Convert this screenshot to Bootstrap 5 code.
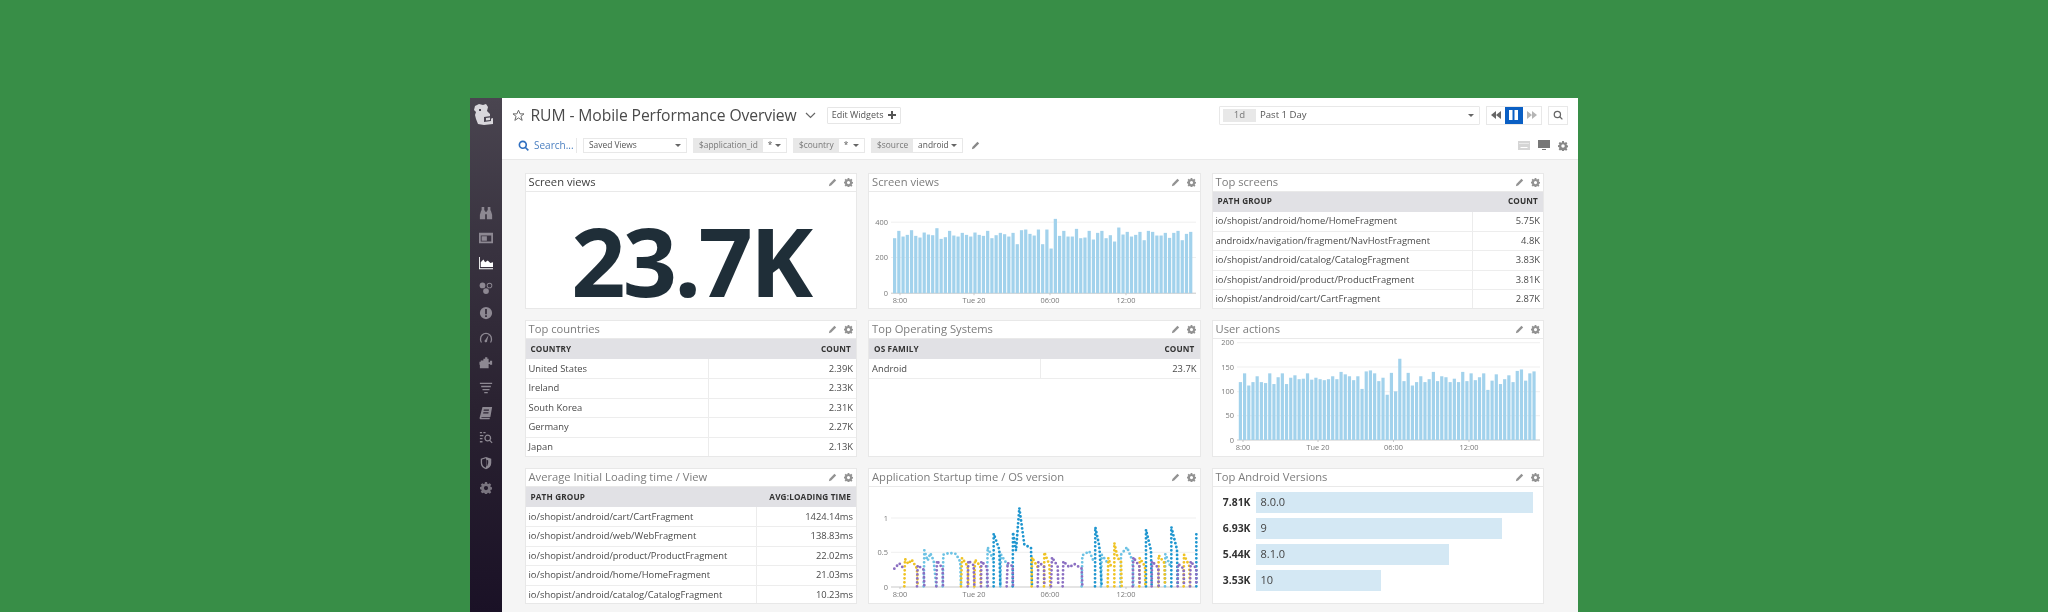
<!doctype html>
<html lang="en">
<head>
<meta charset="utf-8">
<title>RUM - Mobile Performance Overview</title>
<link href="https://cdn.jsdelivr.net/npm/bootstrap@5.3.0/dist/css/bootstrap.min.css" rel="stylesheet">
<style>
html,body{height:612px;overflow:hidden}
body{background:#388e47;padding:98px 470.5px 0 470px;font-family:"Open Sans","Noto Sans",sans-serif;color:#444}
.app-window{height:514px;background:#f5f5f5;filter:blur(.6px);overflow:hidden}
.side-rail{width:31.5px;flex:none;background:linear-gradient(180deg,#4a4550 0%,#38323f 30%,#2a2231 60%,#1a1126 100%);padding-top:2px}
.side-logo{height:100px}
.side-logo svg{width:22px;height:22px;margin-left:2px}
.side-item{height:25px}
.side-item svg{width:14px;height:14px;fill:#8d8892}
.side-item.is-on svg{fill:#fff}
.side-item.is-dim svg{width:12px;height:12px;fill:#79747f}
.top-bar{background:#fff;border-bottom:1px solid #e9e9e9;height:62px}
.title-row{height:30px;padding:4px 10px 0 10px}
.dash-title{font-size:15.700px;color:#4a4a4a;margin:0 0 0 6px;font-weight:400;letter-spacing:-.1px;line-height:22px}
.edit-btn{height:17px;width:74px;margin-left:11px;border:1px solid #e6e6e6;font-size:9px;color:#555;background:#fff;border-radius:1px}
.time-pick{width:260.5px;height:19px;border:1px solid #e8e8e8;margin-left:auto;padding:0 5px 0 3px;font-size:9.6px;color:#555;border-radius:1px}
.time-chip{width:33px;height:13px;background:#e8e8e8;color:#777;margin-right:4px;font-size:9.6px}
.play-group{width:56px;height:19px;border:1px solid #e8e8e8;margin-left:6px}
.play-group>div{flex:1}
.play-on{background:#0a5fc4;height:100%}
.find-btn{width:20px;height:19px;border:1px solid #e8e8e8;margin-left:6px}
.filter-row{height:31px;padding:4px 10px 0 16.5px;font-size:8.4px;color:#555}
.find-link{color:#4a7fc0;font-size:10px;width:59px;border-right:1px solid #e8e8e8;height:15px}
.find-link svg{margin-right:5px}
.pick-box{height:15px;border:1px solid #e8e8e8;margin-left:6px;background:#fff}
.pick-views{width:104px;padding:0 5px}
.pick-key{background:#e8e8e8;color:#777;height:100%;padding:0 5px}
.pick-val{flex:1;padding:0 5px}
.caret-mark{width:0;height:0;border-left:3px solid transparent;border-right:3px solid transparent;border-top:3.5px solid #666}
.wid-grid{display:grid;grid-template-columns:repeat(3,332.5px);grid-auto-rows:136.3px;column-gap:11px;row-gap:11.5px;padding:12.5px 0 0 23px}
.wid-box{background:#fff;border:1px solid #e8e8e8;overflow:hidden}
.wid-head{height:18px;flex:none;border-bottom:1px solid #e9e9e9;padding:0 3.5px 0 3px;font-size:11.2px;color:#7c7c7c}
.wid-head.is-dark{color:#3c3c3c}
.wid-tools{gap:7px}
.wid-tools svg{width:9px;height:9px;fill:#929292}
.wid-fill{flex:1;min-height:0}
.wid-fill svg{display:block;width:331px;height:118px}
.big-num{font-size:95px;font-weight:700;color:#1f2e38;letter-spacing:-2.8px;line-height:1;padding-top:21px}
.dd-table{margin:0;table-layout:fixed;width:100%;font-size:9.4px;color:#4a4a4a;--bs-table-color:#4a4a4a}
.dd-table th{background:#e1e1e5;color:#333;font-size:8.2px;font-weight:700;letter-spacing:.15px;height:20px;padding:0 5px;border:0;vertical-align:middle}
.dd-table td{height:19.5px;padding:0 3px;border-bottom:1.5px solid #ededed;vertical-align:middle;white-space:nowrap}
.dd-table td+td{border-left:1px solid #ececec;text-align:right}
.dd-table th+th{text-align:right}
.wid-bars{padding:5px 10px 0 0;gap:5px}
.bar-val{width:43px;flex:none;text-align:right;padding-right:5px;font-size:10.4px;font-weight:700;color:#333}
.bar-line{height:21px}
.bar-track{flex:1}
.bar-fill{height:21px;background:#d4e8f4;padding-left:5px;font-size:11px;color:#444}
</style>
</head>
<body>
<svg class="d-none" aria-hidden="true">
<symbol id="i-pen" viewBox="0 0 16 16"><path d="M11.500 1.500 14.500 4.500 5.500 13.500 1.500 14.500 2.500 10.500z"/></symbol>
<symbol id="i-gear" viewBox="0 0 16 16"><path fill-rule="evenodd" d="M6.600 0h2.800l.4 2.200 1.300.6L13 1.500l2 2-1.300 1.900.6 1.300 2.200.4v2.800l-2.200.4-.6 1.300 1.300 1.900-2 2-1.900-1.300-1.300.6-.4 2.200H6.600l-.4-2.200-1.300-.6L3 15.100l-2-2 1.300-1.900-.6-1.300L-.5 9.500V6.700l2.200-.4.6-1.300L1 3.500l2-2 1.900 1.300 1.300-.6zM8 5.300a2.800 2.800 0 1 0 0 5.600 2.800 2.800 0 0 0 0-5.600z"/></symbol>
</svg>
<div class="app-window d-flex">
  <nav class="side-rail d-flex flex-column align-items-center">
    <div class="side-logo w-100"><svg viewBox="0 0 22 22"><path fill="#d9d7dc" d="M3 3 7 1l4 1 3-1 2 3-1 4 3 3v5l3-1v6l-9 1-6-1-2-5-1-4 1-3-2-2z"/><path fill="#4a4550" d="M7 6h2v2H7zM12 14l7-1v5l-7 1z"/><path fill="#d9d7dc" d="M14 15l4-.5v2.500l-4 .5z"/></svg></div>
    <div class="side-item d-flex align-items-center"><svg viewBox="0 0 16 16"><path d="M3 1h3v4H3zM10 1h3v4h-3zM2.500 5h4.500v10H1V10zM9 5h4.500L15 10v5H9zM7 6.500h2v3H7z"/></svg></div>
    <div class="side-item d-flex align-items-center"><svg viewBox="0 0 16 16"><path fill-rule="evenodd" d="M0 2h16v12H0zM2 5v7h12V5zM3 6h6v5H3z"/></svg></div>
    <div class="side-item is-on d-flex align-items-center"><svg viewBox="0 0 16 16"><path d="M0 1h1v13h15v1H0zM2 12.500V7l3-3 2 3 3-2 3 3 3-1v5.500z"/></svg></div>
    <div class="side-item d-flex align-items-center"><svg viewBox="0 0 16 16"><circle cx="4" cy="5" r="3.300"/><circle cx="8" cy="11.500" r="3.300"/><path fill-rule="evenodd" d="M12 2a3.200 3.200 0 1 1 0 6.400A3.200 3.200 0 0 1 12 2zm0 1a2.200 2.200 0 1 0 0 4.400A2.200 2.200 0 0 0 12 3z"/></svg></div>
    <div class="side-item d-flex align-items-center"><svg viewBox="0 0 16 16"><path fill-rule="evenodd" d="M8 1a7 7 0 1 1 0 14A7 7 0 0 1 8 1zM7 3.500v6h2v-6zM7 10.500v2h2v-2z"/></svg></div>
    <div class="side-item d-flex align-items-center"><svg viewBox="0 0 16 16"><path d="M8 2a7 7 0 0 1 7 7 7 7 0 0 1-1 4h-1.500a6 6 0 0 0 1-4A5.500 5.500 0 0 0 8 3.500 5.500 5.500 0 0 0 2.500 9a6 6 0 0 0 1 4H2A7 7 0 0 1 1 9a7 7 0 0 1 7-7zM11 4.500 9.300 11a1.500 1.500 0 1 1-2-1z"/></svg></div>
    <div class="side-item d-flex align-items-center"><svg viewBox="0 0 16 16"><path d="M5 3h2V1.500h2.500V3H11v4h1.500V5.500H15V10h-2.500V9H11v5H1V10H.5V6.500H2V5h3z"/></svg></div>
    <div class="side-item d-flex align-items-center"><svg viewBox="0 0 16 16"><path d="M1 2h14v1.500H1zM2.500 5.500h11V7h-11zM4 9h8v1.500H4zM6 12.500h4V14H6z"/></svg></div>
    <div class="side-item d-flex align-items-center"><svg viewBox="0 0 16 16"><path fill-rule="evenodd" d="M4 1h11l-2 11.500H3.500c-.6 0-1 .4-1 .8h10L12 15H1.500c-.5 0-1-.5-.8-1.500zM5.500 4l-.3 1.500h6L11.500 4zM5 7l-.3 1.500h6L11 7z"/></svg></div>
    <div class="side-item d-flex align-items-center"><svg viewBox="0 0 16 16"><path fill-rule="evenodd" d="M1 1h2.500v1.500H1zM5 1h2.500v1.500H5zM1 4.500h4V6H1zM1 8h3v1.500H1zM1 11.500h3V13H1zM10 4a4 4 0 0 1 3.100 6.500L15.500 13l-1 1-2.500-2.500A4 4 0 1 1 10 4zm0 1.500a2.500 2.500 0 1 0 0 5 2.500 2.500 0 0 0 0-5z"/></svg></div>
    <div class="side-item d-flex align-items-center"><svg viewBox="0 0 16 16"><path fill-rule="evenodd" d="M8 1l6 2v5c0 3.500-2.500 6-6 7-3.500-1-6-3.500-6-7V3zM8 2.500 3.500 4v4c0 2.700 1.800 4.500 4.500 5.400zM8.500 4v8l1-1 1-3V5z"/></svg></div>
    <div class="side-item is-dim d-flex align-items-center"><svg viewBox="0 0 16 16"><use href="#i-gear"/></svg></div>
  </nav>
  <main class="flex-grow-1">
    <header class="top-bar">
      <div class="title-row d-flex align-items-center">
        <svg width="13" height="13" viewBox="0 0 16 16" fill="none" stroke="#666" stroke-width="1.200"><path d="M8 1.500 10 6h4.800l-3.800 3 1.500 5L8 11l-4.500 3L5 9 1.200 6H6z"/></svg>
        <h1 class="dash-title">RUM - Mobile Performance Overview</h1>
        <svg class="ms-2" width="11" height="7" viewBox="0 0 11 7" fill="none" stroke="#666" stroke-width="1.200"><path d="M1 1l4.500 4.500L10 1"/></svg>
        <div class="edit-btn d-flex align-items-center justify-content-center gap-1">Edit Widgets <svg width="8" height="8" viewBox="0 0 8 8" fill="#555"><path d="M3 0h2v3h3v2H5v3H3V5H0V3h3z"/></svg></div>
        <div class="time-pick d-flex align-items-center"><div class="time-chip d-flex align-items-center justify-content-center">1d</div>Past 1 Day<span class="caret-mark ms-auto"></span></div>
        <div class="play-group d-flex align-items-center">
          <div class="d-flex justify-content-center"><svg width="10" height="8" viewBox="0 0 10 8" fill="#666"><path d="M5 0v8L0 4zM10 0v8L5 4z"/></svg></div>
          <div class="play-on d-flex align-items-center justify-content-center"><svg width="9" height="10" viewBox="0 0 9 10" fill="#fff"><path d="M0 0h3.500v10H0zM5.500 0H9v10H5.500z"/></svg></div>
          <div class="d-flex justify-content-center"><svg width="10" height="8" viewBox="0 0 10 8" fill="#b5b5b5"><path d="M0 0v8l5-4zM5 0v8l5-4z"/></svg></div>
        </div>
        <div class="find-btn d-flex align-items-center justify-content-center"><svg width="10" height="10" viewBox="0 0 16 16" fill="none" stroke="#666" stroke-width="2"><circle cx="7" cy="7" r="5"/><path d="M10.500 10.500 15 15"/></svg></div>
      </div>
      <div class="filter-row d-flex align-items-center">
        <div class="find-link d-flex align-items-center"><svg width="11" height="11" viewBox="0 0 16 16" fill="none" stroke="#2f6fc0" stroke-width="2.400"><circle cx="7" cy="7" r="5"/><path d="M10.500 10.500 15 15"/></svg>Search...</div>
        <div class="pick-box pick-views d-flex align-items-center justify-content-between">Saved Views<span class="caret-mark"></span></div>
        <div class="pick-box d-flex align-items-center" style="width:94px"><div class="pick-key d-flex align-items-center">$application_id</div><div class="pick-val d-flex align-items-center justify-content-between">*<span class="caret-mark"></span></div></div>
        <div class="pick-box d-flex align-items-center" style="width:72px"><div class="pick-key d-flex align-items-center">$country</div><div class="pick-val d-flex align-items-center justify-content-between">*<span class="caret-mark"></span></div></div>
        <div class="pick-box d-flex align-items-center" style="width:92px"><div class="pick-key d-flex align-items-center">$source</div><div class="pick-val d-flex align-items-center justify-content-between">android<span class="caret-mark"></span></div></div>
        <svg class="ms-2" width="9" height="9" fill="#888"><use href="#i-pen"/></svg>
        <div class="ms-auto d-flex align-items-center gap-2">
          <svg width="12" height="9" viewBox="0 0 12 9" fill="#d5d5d5"><path fill-rule="evenodd" d="M0 0h12v9H0zM1.500 2v1h1V2zM3.500 2v1h1V2zM5.500 2v1h1V2zM7.500 2v1h1V2zM9.500 2v1h1V2zM2.500 6v1h7V6z"/></svg>
          <svg width="12" height="11" viewBox="0 0 12 11" fill="#777"><path d="M0 0h12v8H0zM4 9h4v1H4z"/></svg>
          <svg width="10" height="10" fill="#888"><use href="#i-gear"/></svg>
        </div>
      </div>
    </header>
    <section class="wid-grid">
      <article class="wid-box d-flex flex-column">
        <div class="wid-head is-dark d-flex align-items-center justify-content-between">Screen views<span class="wid-tools d-flex"><svg><use href="#i-pen"/></svg><svg><use href="#i-gear"/></svg></span></div>
        <div class="wid-fill d-flex align-items-center justify-content-center big-num">23.7K</div>
      </article>
      <article class="wid-box d-flex flex-column">
        <div class="wid-head d-flex align-items-center justify-content-between">Screen views<span class="wid-tools d-flex"><svg><use href="#i-pen"/></svg><svg><use href="#i-gear"/></svg></span></div>
        <div class="wid-fill"><svg id="chart-views" viewBox="0 0 331 118"></svg></div>
      </article>
      <article class="wid-box d-flex flex-column">
        <div class="wid-head d-flex align-items-center justify-content-between">Top screens<span class="wid-tools d-flex"><svg><use href="#i-pen"/></svg><svg><use href="#i-gear"/></svg></span></div>
        <table class="table dd-table"><colgroup><col style="width:78.600%"><col></colgroup>
          <thead><tr><th>PATH GROUP</th><th>COUNT</th></tr></thead>
          <tbody>
            <tr><td>io/shopist/android/home/HomeFragment</td><td>5.75K</td></tr>
            <tr><td>androidx/navigation/fragment/NavHostFragment</td><td>4.8K</td></tr>
            <tr><td>io/shopist/android/catalog/CatalogFragment</td><td>3.83K</td></tr>
            <tr><td>io/shopist/android/product/ProductFragment</td><td>3.81K</td></tr>
            <tr><td>io/shopist/android/cart/CartFragment</td><td>2.87K</td></tr>
          </tbody></table>
      </article>
      <article class="wid-box d-flex flex-column">
        <div class="wid-head d-flex align-items-center justify-content-between">Top countries<span class="wid-tools d-flex"><svg><use href="#i-pen"/></svg><svg><use href="#i-gear"/></svg></span></div>
        <table class="table dd-table"><colgroup><col style="width:55.500%"><col></colgroup>
          <thead><tr><th>COUNTRY</th><th>COUNT</th></tr></thead>
          <tbody>
            <tr><td>United States</td><td>2.39K</td></tr>
            <tr><td>Ireland</td><td>2.33K</td></tr>
            <tr><td>South Korea</td><td>2.31K</td></tr>
            <tr><td>Germany</td><td>2.27K</td></tr>
            <tr><td>Japan</td><td>2.13K</td></tr>
          </tbody></table>
      </article>
      <article class="wid-box d-flex flex-column">
        <div class="wid-head d-flex align-items-center justify-content-between">Top Operating Systems<span class="wid-tools d-flex"><svg><use href="#i-pen"/></svg><svg><use href="#i-gear"/></svg></span></div>
        <table class="table dd-table"><colgroup><col style="width:52%"><col></colgroup>
          <thead><tr><th>OS FAMILY</th><th>COUNT</th></tr></thead>
          <tbody><tr><td>Android</td><td>23.7K</td></tr></tbody></table>
      </article>
      <article class="wid-box d-flex flex-column">
        <div class="wid-head d-flex align-items-center justify-content-between">User actions<span class="wid-tools d-flex"><svg><use href="#i-pen"/></svg><svg><use href="#i-gear"/></svg></span></div>
        <div class="wid-fill"><svg id="chart-actions" viewBox="0 0 331 118"></svg></div>
      </article>
      <article class="wid-box d-flex flex-column">
        <div class="wid-head d-flex align-items-center justify-content-between">Average Initial Loading time / View<span class="wid-tools d-flex"><svg><use href="#i-pen"/></svg><svg><use href="#i-gear"/></svg></span></div>
        <table class="table dd-table"><colgroup><col style="width:70%"><col></colgroup>
          <thead><tr><th>PATH GROUP</th><th>AVG:LOADING TIME</th></tr></thead>
          <tbody>
            <tr><td>io/shopist/android/cart/CartFragment</td><td>1424.14ms</td></tr>
            <tr><td>io/shopist/android/web/WebFragment</td><td>138.83ms</td></tr>
            <tr><td>io/shopist/android/product/ProductFragment</td><td>22.02ms</td></tr>
            <tr><td>io/shopist/android/home/HomeFragment</td><td>21.03ms</td></tr>
            <tr><td>io/shopist/android/catalog/CatalogFragment</td><td>10.23ms</td></tr>
          </tbody></table>
      </article>
      <article class="wid-box d-flex flex-column">
        <div class="wid-head d-flex align-items-center justify-content-between">Application Startup time / OS version<span class="wid-tools d-flex"><svg><use href="#i-pen"/></svg><svg><use href="#i-gear"/></svg></span></div>
        <div class="wid-fill"><svg id="chart-startup" viewBox="0 0 331 118"></svg></div>
      </article>
      <article class="wid-box d-flex flex-column">
        <div class="wid-head d-flex align-items-center justify-content-between">Top Android Versions<span class="wid-tools d-flex"><svg><use href="#i-pen"/></svg><svg><use href="#i-gear"/></svg></span></div>
        <div class="wid-bars d-flex flex-column">
          <div class="bar-line d-flex align-items-center"><div class="bar-val">7.81K</div><div class="bar-track"><div class="bar-fill d-flex align-items-center" style="width:100%">8.0.0</div></div></div>
          <div class="bar-line d-flex align-items-center"><div class="bar-val">6.93K</div><div class="bar-track"><div class="bar-fill d-flex align-items-center" style="width:88.700%">9</div></div></div>
          <div class="bar-line d-flex align-items-center"><div class="bar-val">5.44K</div><div class="bar-track"><div class="bar-fill d-flex align-items-center" style="width:69.600%">8.1.0</div></div></div>
          <div class="bar-line d-flex align-items-center"><div class="bar-val">3.53K</div><div class="bar-track"><div class="bar-fill d-flex align-items-center" style="width:45.200%">10</div></div></div>
        </div>
      </article>
    </section>
  </main>
</div>
<script src="https://cdn.jsdelivr.net/npm/bootstrap@5.3.0/dist/js/bootstrap.bundle.min.js"></script>
<script>
var NS='http://www.w3.org/2000/svg';
function add(p,n,a,t){var e=document.createElementNS(NS,n);for(var k in a)e.setAttribute(k,a[k]);if(t)e.textContent=t;p.appendChild(e);return e}
function frame(s,o){
  o.grid.forEach(function(g){
    add(s,'line',{x1:o.ax,x2:o.rx,y1:g[1],y2:g[1],stroke:g[0]==='0'?'#c9c9c9':'#efefef','stroke-width':1});
    add(s,'text',{x:o.ax-3,y:g[1]+2.5,'text-anchor':'end','font-size':7.4,fill:'#777'},g[0]);
  });
  o.ticks.forEach(function(t){
    add(s,'line',{x1:t[1],x2:t[1],y1:o.base,y2:o.base+2,stroke:'#bbb','stroke-width':.8});
    add(s,'text',{x:t[1],y:o.base+10,'text-anchor':'middle','font-size':7.4,fill:'#777'},t[0]);
  });
}
function bars(s,o,h){
  h.forEach(function(v,i){add(s,'rect',{x:o.x0+i*o.pitch,y:o.base-v,width:o.pitch-1,height:v,fill:'#a2d2ec'})});
}
/* Screen views: bar tops read off the reference */
var tops=[200,178,195,190,176,193,198,183,189,191,170,202,197,178,192,195,184,190,195,183,190,193,178,200,191,184,188,195,184,218,176,174,187,192,174,218,174,231,142,193,178,195,195,172,200,198,178,204,184,178,200,191,210,168,189,181,195,190,181,206,178,181,192,192,184,199,184,178,206,187,181];
var sv=document.getElementById('chart-views');
var oV={ax:22,rx:327,base:101.2,grid:[['400',30.2],['200',65.5],['0',101.2]],ticks:[['8:00',31],['Tue 20',105],['06:00',181],['12:00',257]],x0:24,pitch:4.23};
frame(sv,oV);
bars(sv,oV,tops.map(function(t){return (365-t)/3}));
/* User actions */
var acts=[119,137,112,119,131,119,117,137,115,129,137,115,128,133,125,126,137,124,128,125,123,125,131,125,140,135,131,123,131,105,141,143,137,121,128,93,138,100,167,121,138,112,119,131,119,125,140,121,131,129,119,126,119,140,121,137,123,129,137,103,122,135,115,125,133,119,142,145,122,137,141];
var sa=document.getElementById('chart-actions');
var oA={ax:24,rx:327,base:101,grid:[['200',3.7],['150',28],['100',52.7],['50',76.7],['0',101]],ticks:[['8:00',30],['Tue 20',105],['06:00',180.5],['12:00',256]],x0:25.8,pitch:4.195};
frame(sa,oA);
bars(sa,oA,acts.map(function(v){return v*.4865}));
/* Startup time: dotted step series, coordinates read from a 3x crop */
var ss=document.getElementById('chart-startup');
var oS={ax:22,rx:327,base:100,grid:[['1',31],['0.5',65.3],['0',100]],ticks:[['8:00',31],['Tue 20',105],['06:00',181],['12:00',257]]};
frame(ss,oS);
var g=add(ss,'g',{transform:'translate(-8 4.3) scale(.33333)',fill:'none','stroke-linecap':'round','stroke-width':8.5,'stroke-dasharray':'0 12'});
var series={
 '#6cc2e4':[[188,285,190,177,200,208,208,186,218,208,226,285],[245,285,247,190,265,185,285,188,298,212,300,285],[378,285,380,168,398,208],[418,285,420,190,440,222],[662,285,664,192,685,180,700,215],[720,285,722,190,740,215],[778,285,780,190,798,168,815,210,817,285],[912,285,913,188,930,230]],
 '#1d95cf':[[398,285,398,127,415,175,418,285],[455,285,456,123,465,178,475,50,490,160,510,170,513,285],[702,285,703,108,715,165,722,285],[855,285,855,115,870,178,872,285],[931,285,931,107,948,175,950,285],[1006,285,1006,118]],
 '#efc324':[[130,285,132,203,142,218,152,205,168,232,170,285],[300,285,303,200,320,225,322,285],[340,285,342,205,358,225,360,285],[512,285,513,198,530,228],[549,285,550,183,565,220,568,285],[740,285,742,200,750,225],[760,285,760,155,770,200,780,210,782,285],[835,285,836,200,852,225,853,285],[892,285,893,192,910,215,912,285],[968,285,969,190,985,225,987,285]],
 '#8b6fc2':[[100,232,115,216,128,232],[168,285,170,222,188,235,190,285],[226,285,228,208,245,232,246,285],[320,285,322,208,338,222,340,285],[360,285,361,210,378,228,380,285],[437,285,440,215,455,225,456,285],[530,285,532,212,549,226,550,285],[570,285,573,198,590,225,592,285],[605,285,607,210,625,228,640,218,662,232,664,285],[815,285,817,198,835,225,836,285],[872,285,873,210,892,230,893,285],[950,285,951,218,968,232,969,285],[987,285,989,210,1006,232,1006,285]]
};
Object.keys(series).forEach(function(c){series[c].forEach(function(p){add(g,'polyline',{points:p.join(' '),stroke:c})})});
</script>
</body>
</html>
